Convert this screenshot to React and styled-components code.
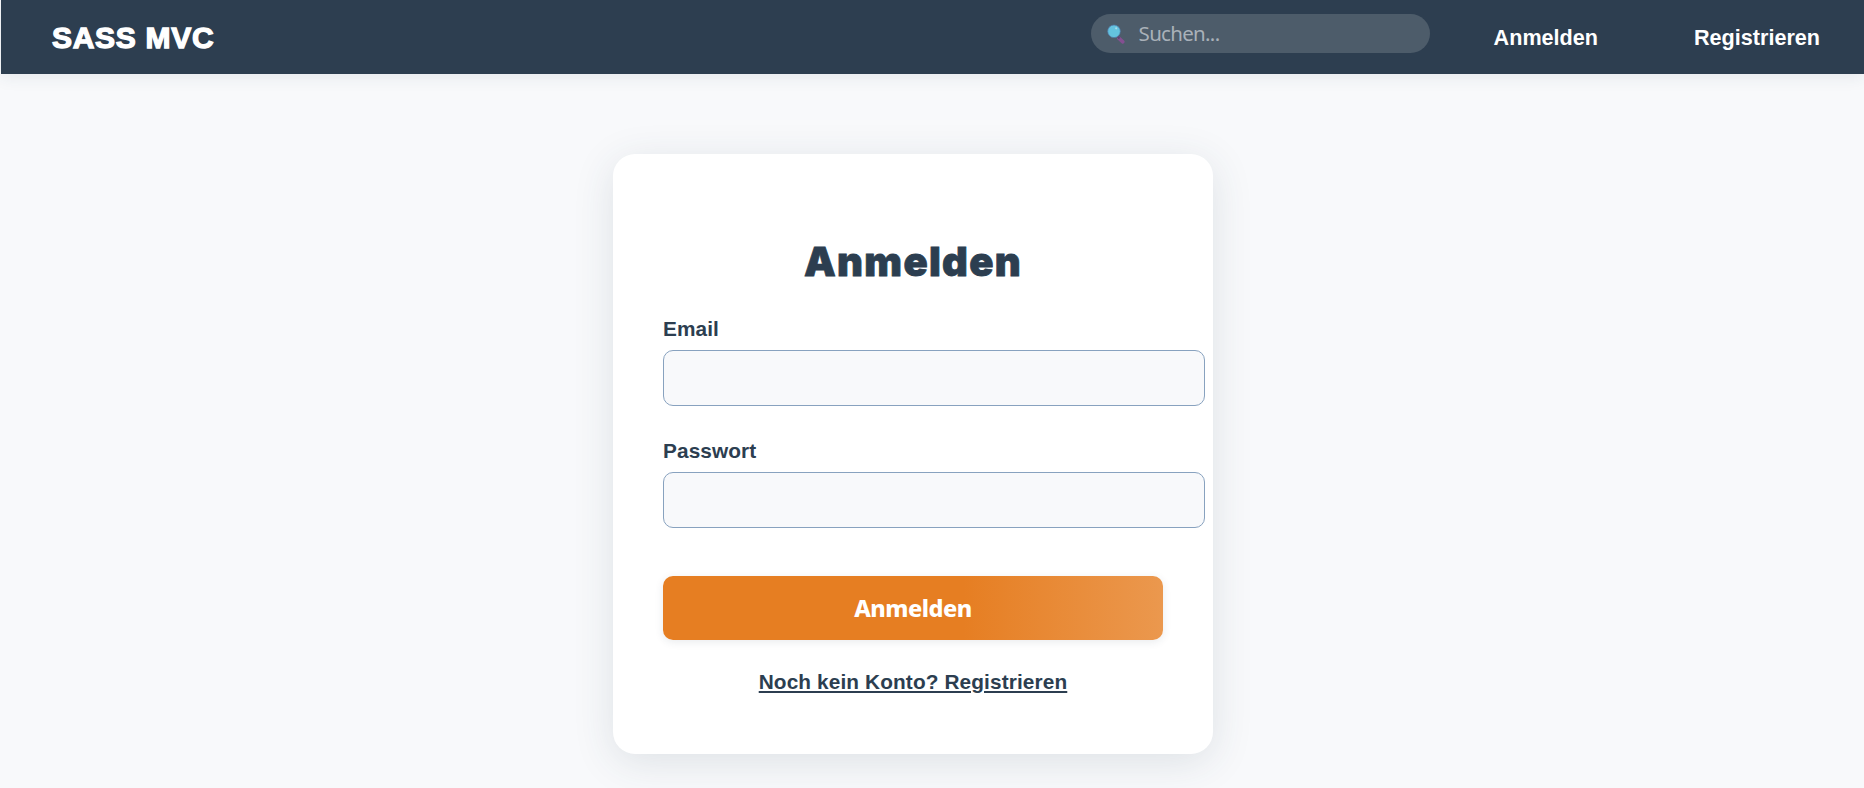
import React from 'react';
import styled, { createGlobalStyle } from 'styled-components';

const GlobalStyle = createGlobalStyle`
  html, body { margin: 0; padding: 0; }
  body {
    background: #f8f9fb;
    color: #2c3e50;
    font-family: "Liberation Sans", Arial, sans-serif;
    overflow: hidden;
  }
`;

const Page = styled.div`
  box-sizing: border-box;
  height: 788px;
  padding-left: 1px;
  overflow: hidden;
`;

const Navbar = styled.header`
  box-sizing: border-box;
  display: flex;
  align-items: center;
  height: 74px;
  padding: 0 44px 0 51px;
  background: #2d3e50;
  box-shadow: 0 2px 16px rgba(44, 72, 88, 0.1);
`;

const Brand = styled.a`
  margin-right: auto;
  padding-top: 2px;
  color: #fff;
  font-size: 30px;
  font-weight: 900;
  line-height: 40px;
  letter-spacing: 0.7px;
  -webkit-text-stroke: 1.3px #fff;
`;

const SearchBox = styled.label`
  box-sizing: border-box;
  display: flex;
  align-items: center;
  gap: 14px;
  width: 339px;
  height: 39px;
  margin: 0 64px 7px 0;
  padding: 0 16px;
  border-radius: 20px;
  background: #4d5c6a;
`;

const SearchInput = styled.input`
  flex: 1;
  min-width: 0;
  padding: 0 0 1px;
  border: 0;
  outline: 0;
  background: transparent;
  color: #fff;
  font-family: "Noto Sans", sans-serif;
  font-size: 20.5px;
  line-height: 28px;
  letter-spacing: -0.7px;
  &::placeholder { color: #a9b1b9; opacity: 1; }
`;

const NavLinks = styled.nav`
  display: flex;
  gap: 96px;
  padding-top: 1px;
`;

const NavLink = styled.a`
  color: #fff;
  font-size: 21.6px;
  font-weight: 700;
  line-height: 30px;
`;

const Content = styled.main`
  display: flex;
  justify-content: center;
  width: 1824px;
  padding-top: 80px;
`;

const Card = styled.section`
  box-sizing: border-box;
  width: 600px;
  height: 600px;
  padding: 84px 50px 0;
  border-radius: 22px;
  background: #fff;
  box-shadow: 0 8px 40px rgba(44, 72, 88, 0.13);
`;

const Title = styled.h1`
  margin: 0 0 29px;
  text-align: center;
  font-family: Inter, sans-serif;
  font-size: 40px;
  font-weight: 900;
  line-height: 48px;
  letter-spacing: 1.3px;
  -webkit-text-stroke: 0.8px #2c3e50;
`;

const Field = styled.div`
  margin-bottom: 31px;
`;

const Label = styled.label`
  display: block;
  margin-bottom: 7px;
  font-size: 20.8px;
  font-weight: 700;
  line-height: 28px;
  letter-spacing: 0.1px;
`;

const TextInput = styled.input`
  box-sizing: border-box;
  display: block;
  width: 542px;
  height: 56px;
  padding: 0 20px;
  border: 1px solid #88a2bf;
  border-radius: 10px;
  outline: 0;
  background: #f8f9fb;
  font-size: 20px;
`;

const SubmitButton = styled.button`
  display: block;
  width: 100%;
  height: 64px;
  margin-top: 48px;
  padding: 0;
  border: 0;
  border-radius: 10px;
  background: linear-gradient(90deg, #e67e22 60%, #eb984e 100%);
  box-shadow: 0 2px 8px rgba(44, 62, 80, 0.1);
  color: #fff;
  font-family: "Noto Sans", sans-serif;
  font-size: 23.5px;
  font-weight: 800;
  letter-spacing: -0.5px;
`;

const RegisterLink = styled.a`
  display: block;
  width: fit-content;
  margin: 28px auto 0;
  font-size: 20.8px;
  font-weight: 700;
  line-height: 28px;
  letter-spacing: 0.12px;
  text-decoration: underline;
  text-decoration-thickness: 2px;
  text-underline-offset: 2px;
`;

function Magnifier() {
  return (
    <svg width="18" height="20" viewBox="0 0 18 20" aria-hidden="true">
      <path d="M11.8 14.2L15.8 17.8" stroke="#844f91" strokeWidth="3.6" strokeLinecap="round" />
      <path d="M10.8 12.8L12.5 14.5" stroke="#5c456f" strokeWidth="2" />
      <circle cx="7" cy="7.3" r="6.3" fill="#64c2df" stroke="#5078a8" strokeWidth="0.7" />
      <circle cx="9.2" cy="4.3" r="1.1" fill="#a8dcea" />
    </svg>
  );
}

export default function App() {
  return (
    <Page>
      <GlobalStyle />
      <Navbar>
        <Brand>SASS MVC</Brand>
        <SearchBox>
          <Magnifier />
          <SearchInput placeholder="Suchen..." />
        </SearchBox>
        <NavLinks>
          <NavLink>Anmelden</NavLink>
          <NavLink>Registrieren</NavLink>
        </NavLinks>
      </Navbar>
      <Content>
        <Card>
          <Title>Anmelden</Title>
          <Field>
            <Label htmlFor="email">Email</Label>
            <TextInput id="email" type="email" />
          </Field>
          <Field>
            <Label htmlFor="password">Passwort</Label>
            <TextInput id="password" type="password" />
          </Field>
          <SubmitButton type="button">Anmelden</SubmitButton>
          <RegisterLink>Noch kein Konto? Registrieren</RegisterLink>
        </Card>
      </Content>
    </Page>
  );
}
